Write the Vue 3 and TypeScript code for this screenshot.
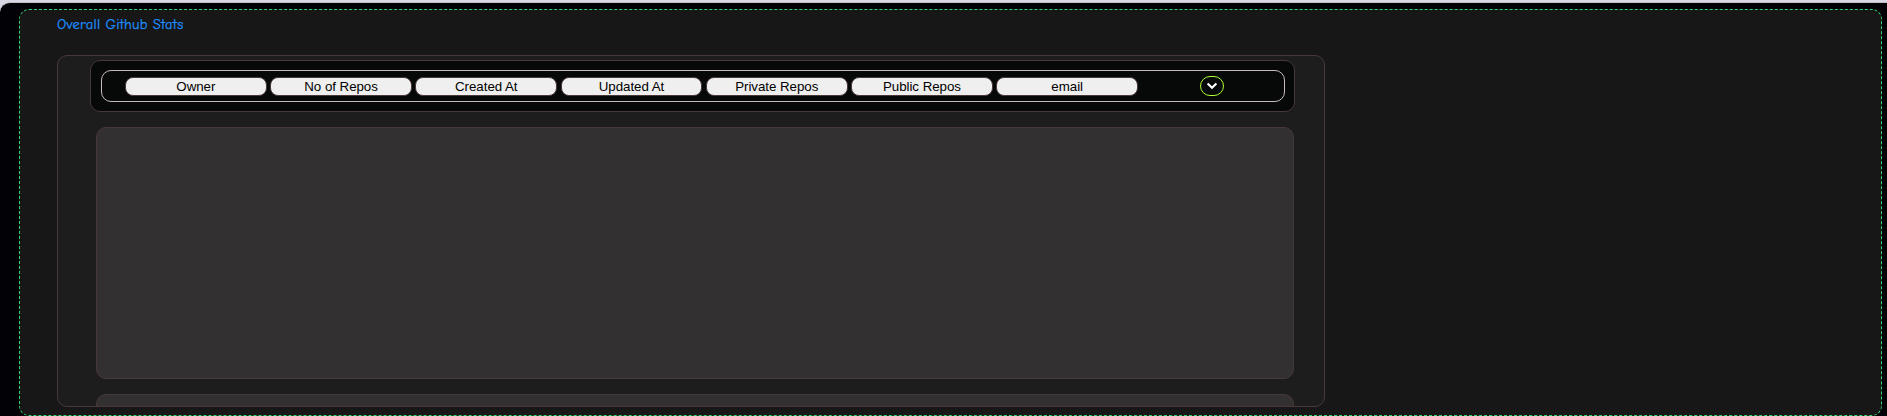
<script setup lang="ts">
const columns: string[] = [
  'Owner',
  'No of Repos',
  'Created At',
  'Updated At',
  'Private Repos',
  'Public Repos',
  'email',
]
</script>

<template>
  <div class="page">
    <main class="shell">
      <section class="stats">
        <h1 class="title">Overall Github Stats</h1>
        <div class="card">
          <div class="header">
            <div class="toolbar">
              <div class="columns">
                <button v-for="name in columns" :key="name" class="column" type="button">{{ name }}</button>
              </div>
              <button class="toggle" type="button" aria-label="Expand">
                <svg width="12" height="8" viewBox="0 0 12 8" fill="none">
                  <path d="M1.6 1.6 L6 5.8 L10.4 1.6" stroke="#fff" stroke-width="2.1" />
                </svg>
              </button>
            </div>
          </div>
          <div class="panel"></div>
          <div class="panel"></div>
        </div>
      </section>
    </main>
  </div>
</template>

<style>
body {
  background: #d8d7e6;
  overflow: hidden;
}
</style>

<style scoped>
* {
  box-sizing: border-box;
}
.page {
  height: 416px;
  padding-top: 2px;
  overflow: hidden;
}
.shell {
  height: 414px;
  padding: 6px 5px 0 19px;
  border-top: 1px solid #c8bcc4;
  border-radius: 10px 0 0 0;
  background: #020206;
}
.stats {
  height: 407px;
  padding: 0 0 0 37px;
  border: 1px dashed #2ed573;
  border-radius: 10px;
  background: #171717;
}
.title {
  height: 45px;
  margin: 0;
  padding-top: 6px;
  font: 400 14.5px/18px "Comic Sans MS", "Comic Neue", Lato, sans-serif;
  letter-spacing: 0.25px;
  -webkit-text-stroke: 0.25px #1e90ff;
  color: #1e90ff;
}
.card {
  width: 1268px;
  height: 352px;
  padding: 4px 30px 0 32px;
  border: 1px solid #493838;
  border-radius: 10px;
  background: #1d1d1d;
  overflow: hidden;
}
.header {
  width: 1205px;
  height: 52px;
  padding: 9px 9px 9px 10px;
  border: 1px solid #493838;
  border-radius: 10px;
  background: #070909;
}
.toolbar {
  display: flex;
  align-items: center;
  width: 1184px;
  height: 32px;
  padding-left: 23px;
  border: 1px solid #c8bcbc;
  border-radius: 10px;
}
.columns {
  display: flex;
  gap: 3.5px;
  width: 1013px;
}
.column {
  flex: 1;
  min-width: 0;
  height: 19px;
  margin: 1px 0 0;
  padding: 0;
  border: 1px solid #493838;
  border-radius: 8px;
  background: #efefef;
  color: #000;
  font: 13.333px/15px "Liberation Sans", Arial, sans-serif;
  letter-spacing: -0.05px;
  text-align: center;
}
.toggle {
  display: flex;
  align-items: center;
  justify-content: center;
  width: 24px;
  height: 20px;
  margin-left: 62px;
  padding: 0;
  border: 1px solid #adff2f;
  border-radius: 10px;
  background: transparent;
}
.panel {
  width: 1198px;
  height: 252px;
  margin: 15px 0 0 6px;
  border: 1px solid #493838;
  border-radius: 10px;
  background: #333031;
}
</style>
